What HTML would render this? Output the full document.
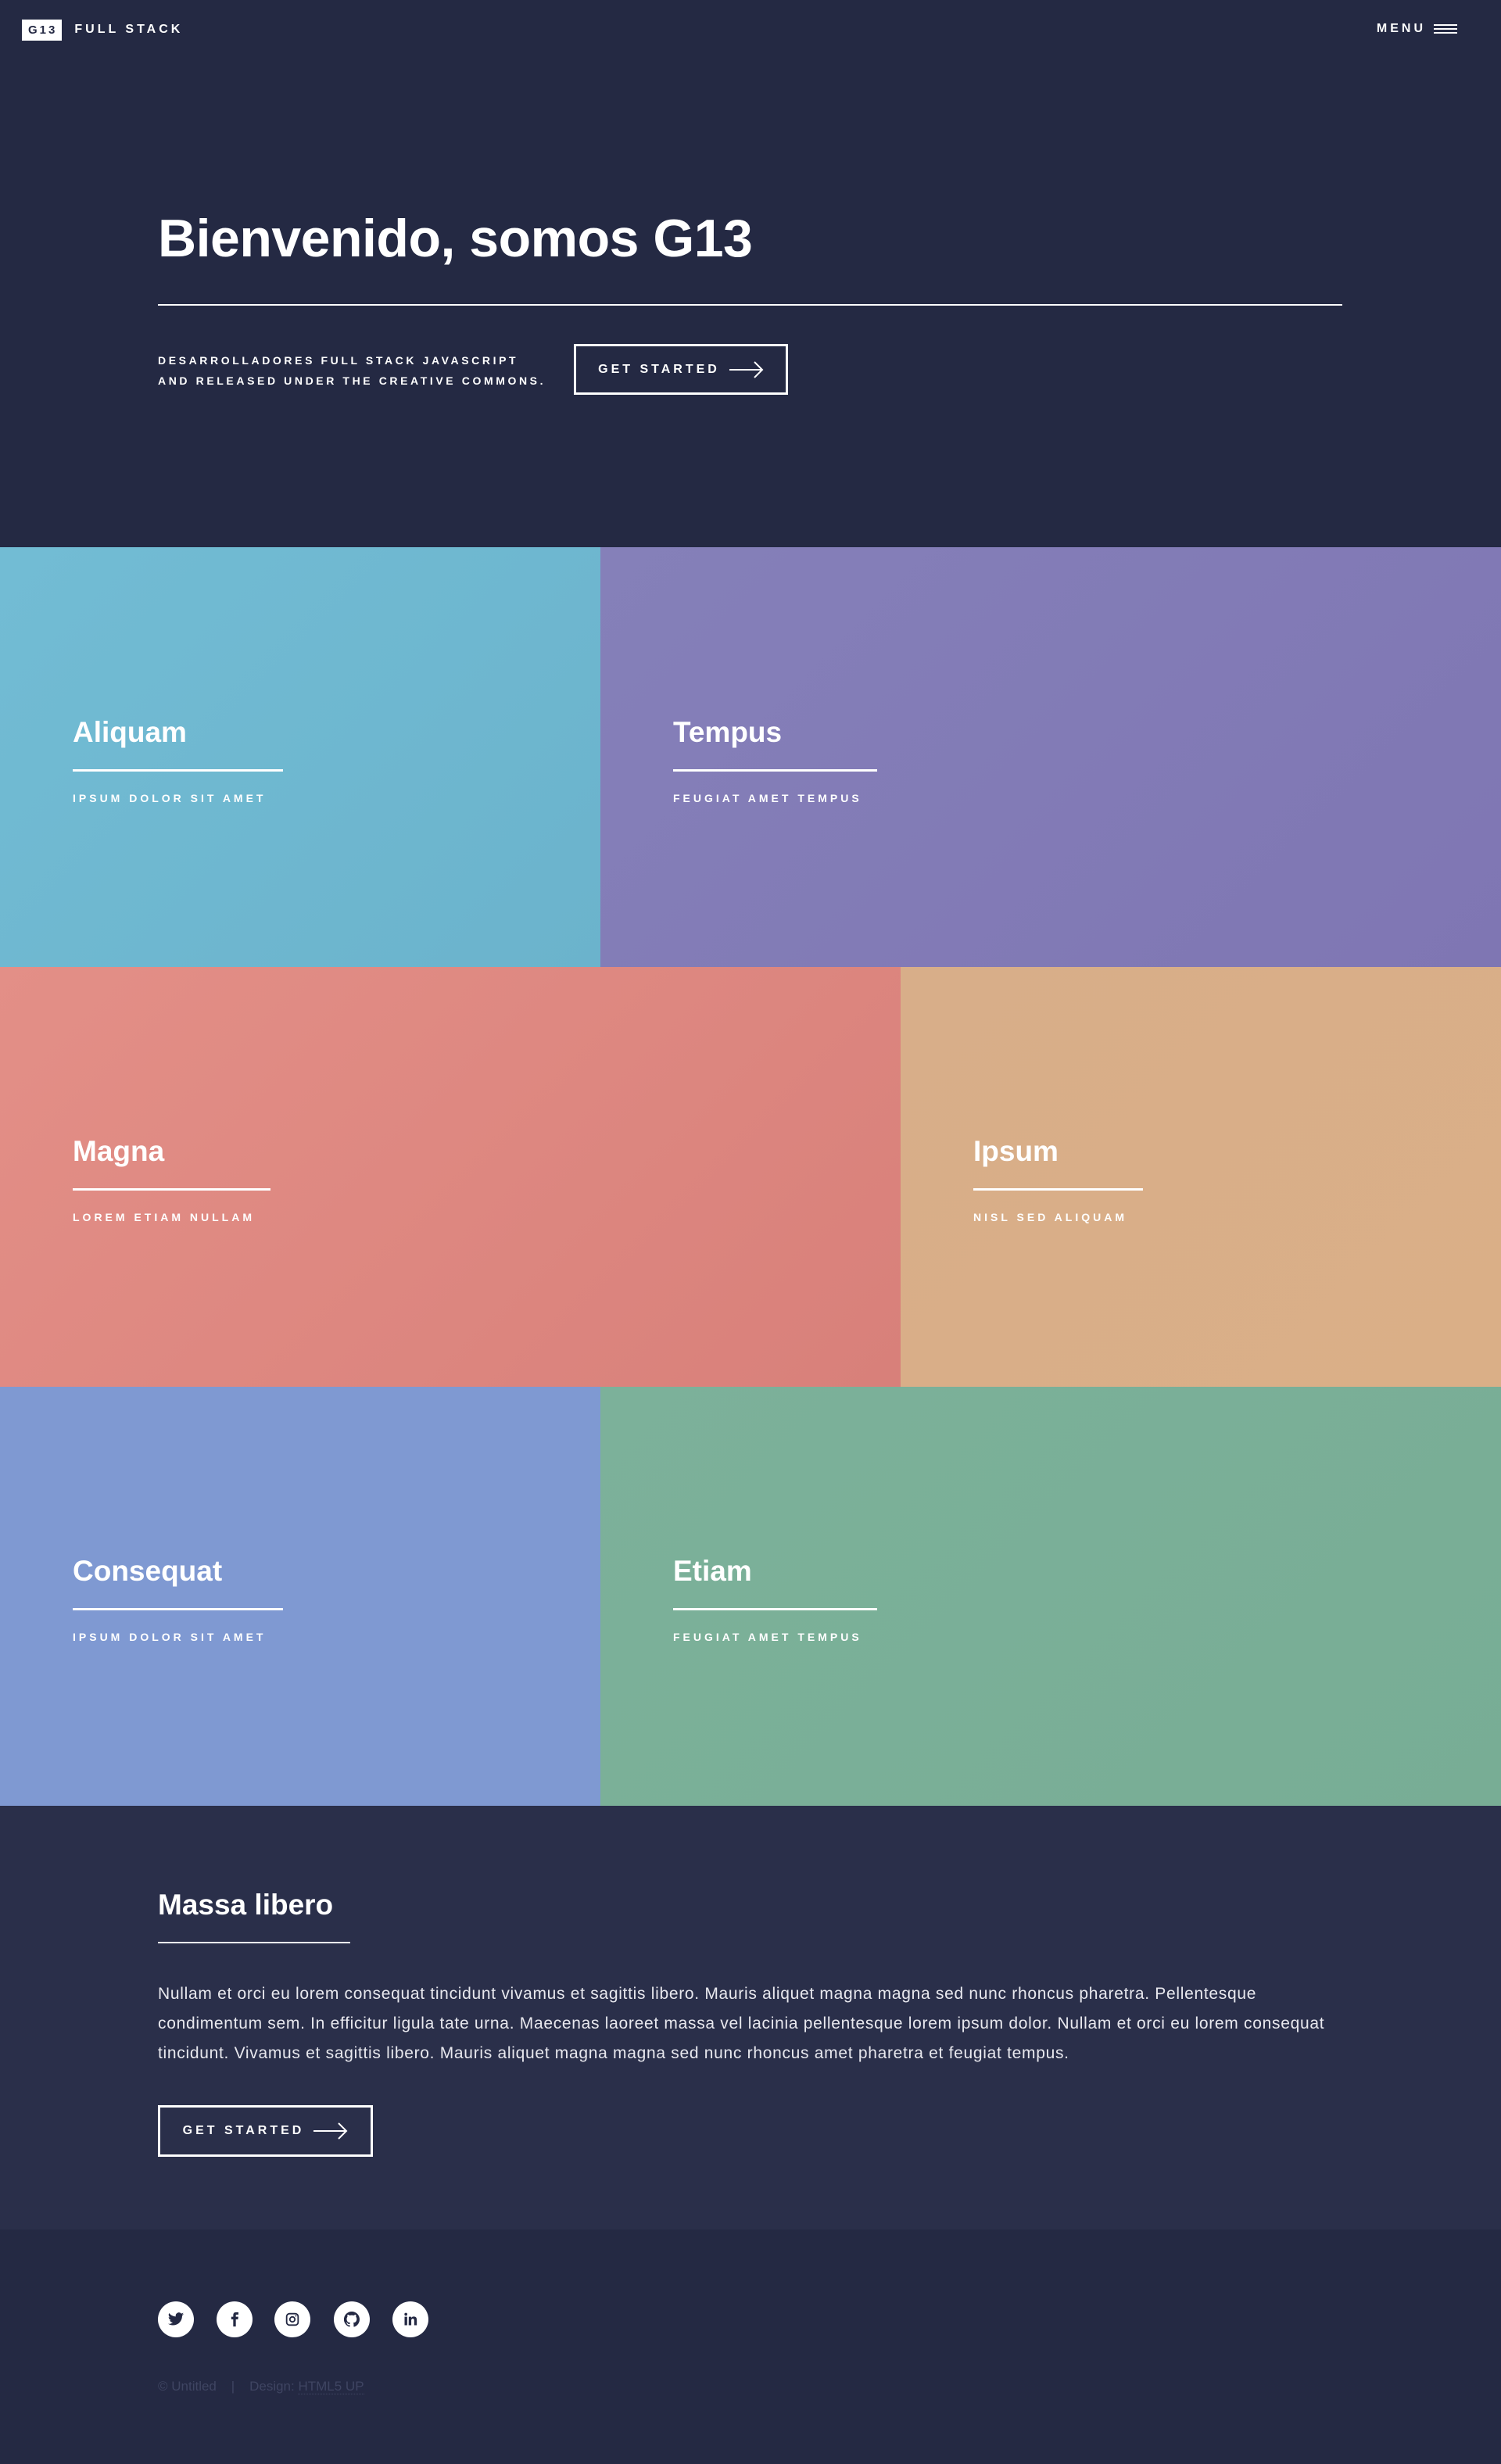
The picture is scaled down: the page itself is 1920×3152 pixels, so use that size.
<!DOCTYPE html>
<html><head><meta charset="utf-8"><style>
*{margin:0;padding:0;box-sizing:border-box}
body{width:1920px;height:3152px;background:#242943;font-family:"Liberation Sans",sans-serif;color:#fff;position:relative;overflow:hidden}
.abs{position:absolute;white-space:nowrap}
.logo{left:28px;top:24px;height:28px;display:flex;align-items:center}
.logo b{background:#fff;color:#242943;font-size:15px;letter-spacing:3px;padding:5px 6px 5px 8px;font-weight:bold}
.logo span{font-size:16px;letter-spacing:4px;font-weight:bold;margin-left:16px}
.menu{right:56px;top:28px;font-size:16px;letter-spacing:4px;font-weight:bold;display:flex;align-items:center}
.burger{width:30px;margin-left:10px}
.burger i{display:block;height:2px;background:#fff;margin:3px 0}
h1{left:202px;top:266px;font-size:68px;font-weight:bold;letter-spacing:-0.5px}
.hr{background:#fff}
.sub{left:202px;top:448px;font-size:14px;font-weight:bold;letter-spacing:3.6px;line-height:26px}
.btn{border:3px solid #fff;display:flex;align-items:center;justify-content:center;font-size:16px;font-weight:bold;letter-spacing:4px}
.btn svg{margin-left:12px}
.tile{position:absolute}
.tile h2{position:absolute;left:93px;top:916px;font-size:37px;font-weight:bold;white-space:nowrap}
.tile .l{position:absolute;left:93px;height:3px;background:#fff}
.tile p{position:absolute;left:93px;font-size:14px;font-weight:bold;letter-spacing:4px;white-space:nowrap}
.ic{width:46px;height:46px;border-radius:50%;background:#fff;top:2944px;display:flex;align-items:center;justify-content:center}
</style></head><body>
<div class="abs logo"><b>G13</b><span>FULL STACK</span></div>
<div class="abs menu">MENU<div class="burger"><i></i><i></i><i></i></div></div>
<h1 class="abs">Bienvenido, somos G13</h1>
<div class="abs hr" style="left:202px;top:389px;width:1515px;height:2px"></div>
<div class="abs sub">DESARROLLADORES FULL STACK JAVASCRIPT<br>AND RELEASED UNDER THE CREATIVE COMMONS.</div>
<div class="abs btn" style="left:734px;top:440px;width:274px;height:65px">GET STARTED<svg width="44" height="24" viewBox="0 0 44 24"><path d="M0 12H42M32 2L42 12L32 22" stroke="#fff" stroke-width="2" fill="none"/></svg></div>

<div class="tile" style="left:0;top:700px;width:768px;height:537px;background:linear-gradient(135deg,#72bcd4,#6bb3cc)"></div>
<div class="tile" style="left:768px;top:700px;width:1152px;height:537px;background:linear-gradient(135deg,#8580b9,#7f76b3)"></div>
<div class="tile" style="left:0;top:1237px;width:1152px;height:537px;background:linear-gradient(135deg,#e38f87,#d8807a)"></div>
<div class="tile" style="left:1152px;top:1237px;width:768px;height:537px;background:linear-gradient(135deg,#d8ae89,#daaf87)"></div>
<div class="tile" style="left:0;top:1774px;width:768px;height:536px;background:#7f99d2"></div>
<div class="tile" style="left:768px;top:1774px;width:1152px;height:536px;background:linear-gradient(135deg,#7cb19a,#78ad95)"></div>

<div class="tile" style="left:0;top:0"><h2>Aliquam</h2><div class="l" style="top:984px;width:269px"></div><p style="top:1013px">IPSUM DOLOR SIT AMET</p></div>
<div class="tile" style="left:768px;top:0"><h2>Tempus</h2><div class="l" style="top:984px;width:261px"></div><p style="top:1013px">FEUGIAT AMET TEMPUS</p></div>
<div class="tile" style="left:0;top:536px"><h2>Magna</h2><div class="l" style="top:984px;width:253px"></div><p style="top:1013px">LOREM ETIAM NULLAM</p></div>
<div class="tile" style="left:1152px;top:536px"><h2>Ipsum</h2><div class="l" style="top:984px;width:217px"></div><p style="top:1013px">NISL SED ALIQUAM</p></div>
<div class="tile" style="left:0;top:1073px"><h2>Consequat</h2><div class="l" style="top:984px;width:269px"></div><p style="top:1013px">IPSUM DOLOR SIT AMET</p></div>
<div class="tile" style="left:768px;top:1073px"><h2>Etiam</h2><div class="l" style="top:984px;width:261px"></div><p style="top:1013px">FEUGIAT AMET TEMPUS</p></div>

<div class="abs" style="left:0;top:2310px;width:1920px;height:542px;background:#2a2f4a"></div>
<div class="abs" style="left:202px;top:2416px;font-size:37px;font-weight:bold">Massa libero</div>
<div class="abs hr" style="left:202px;top:2484px;width:246px;height:2px"></div>
<div class="abs" style="left:202px;top:2532px;font-size:21px;line-height:38px;color:#e8e8ee;letter-spacing:0.7px">Nullam et orci eu lorem consequat tincidunt vivamus et sagittis libero. Mauris aliquet magna magna sed nunc rhoncus pharetra. Pellentesque<br>condimentum sem. In efficitur ligula tate urna. Maecenas laoreet massa vel lacinia pellentesque lorem ipsum dolor. Nullam et orci eu lorem consequat<br>tincidunt. Vivamus et sagittis libero. Mauris aliquet magna magna sed nunc rhoncus amet pharetra et feugiat tempus.</div>
<div class="abs btn" style="left:202px;top:2693px;width:275px;height:66px">GET STARTED<svg width="44" height="24" viewBox="0 0 44 24"><path d="M0 12H42M32 2L42 12L32 22" stroke="#fff" stroke-width="2" fill="none"/></svg></div>

<div class="abs ic" style="left:202px"><svg width="22" height="22" viewBox="0 0 24 24"><path fill="#242943" d="M23 4.6c-.8.4-1.7.6-2.6.7.9-.6 1.6-1.4 2-2.5-.9.5-1.9.9-2.9 1.1A4.5 4.5 0 0 0 11.8 8 12.8 12.8 0 0 1 2.5 3.3a4.5 4.5 0 0 0 1.4 6c-.7 0-1.4-.2-2-.6 0 2.2 1.6 4 3.6 4.4-.7.2-1.4.2-2 .1.6 1.8 2.2 3.1 4.2 3.1A9 9 0 0 1 1 18.2 12.8 12.8 0 0 0 7.9 20.2c8.3 0 12.8-6.9 12.8-12.8v-.6c.9-.6 1.6-1.4 2.3-2.2z"/></svg></div>
<div class="abs ic" style="left:277px"><svg width="20" height="20" viewBox="0 0 24 24"><path fill="#242943" d="M14 8V6c0-.9.2-1.4 1.6-1.4H18V1h-3.4C10.8 1 10 3 10 6v2H7v4h3v11h4V12h3.3l.5-4z"/></svg></div>
<div class="abs ic" style="left:351px"><svg width="22" height="22" viewBox="0 0 24 24"><rect x="4" y="4" width="16" height="16" rx="4" fill="none" stroke="#242943" stroke-width="2"/><circle cx="12" cy="12" r="3.5" fill="none" stroke="#242943" stroke-width="2"/><circle cx="16.8" cy="7.2" r="1" fill="#242943"/></svg></div>
<div class="abs ic" style="left:427px"><svg width="24" height="24" viewBox="0 0 24 24"><path fill="#242943" d="M12 2A10 10 0 0 0 8.8 21.5c.5.1.7-.2.7-.5v-1.7c-2.8.6-3.4-1.3-3.4-1.3-.5-1.2-1.1-1.5-1.1-1.5-.9-.6.1-.6.1-.6 1 .1 1.5 1 1.5 1 .9 1.5 2.4 1.1 2.9.8.1-.7.4-1.1.6-1.3-2.2-.3-4.6-1.1-4.6-5 0-1.1.4-2 1-2.7-.1-.3-.4-1.3.1-2.700 0 0 .8-.3 2.8 1a9.6 9.6 0 0 1 5 0c1.9-1.3 2.8-1 2.8-1 .5 1.4.2 2.4.1 2.7.6.7 1 1.6 1 2.7 0 3.9-2.3 4.7-4.6 5 .4.3.7.9.7 1.9V21c0 .3.2.6.7.5A10 10 0 0 0 12 2z"/></svg></div>
<div class="abs ic" style="left:502px"><svg width="20" height="20" viewBox="0 0 24 24"><path fill="#242943" d="M3 8h4v13H3zM5 2a2.2 2.2 0 1 1 0 4.4A2.2 2.2 0 0 1 5 2zM9.5 8h3.8v1.8c.5-1 1.8-2.1 3.8-2.1 4 0 4.7 2.6 4.7 6V21h-4v-6.5c0-1.5 0-3.5-2.1-3.5s-2.4 1.6-2.4 3.4V21h-4z"/></svg></div>
<div class="abs" style="left:202px;top:3043px;font-size:17px;color:#3f4562">© Untitled &nbsp;&nbsp;&nbsp;|&nbsp;&nbsp;&nbsp; Design: <span style="border-bottom:1px dotted #3f4562">HTML5 UP</span></div>
</body></html>
